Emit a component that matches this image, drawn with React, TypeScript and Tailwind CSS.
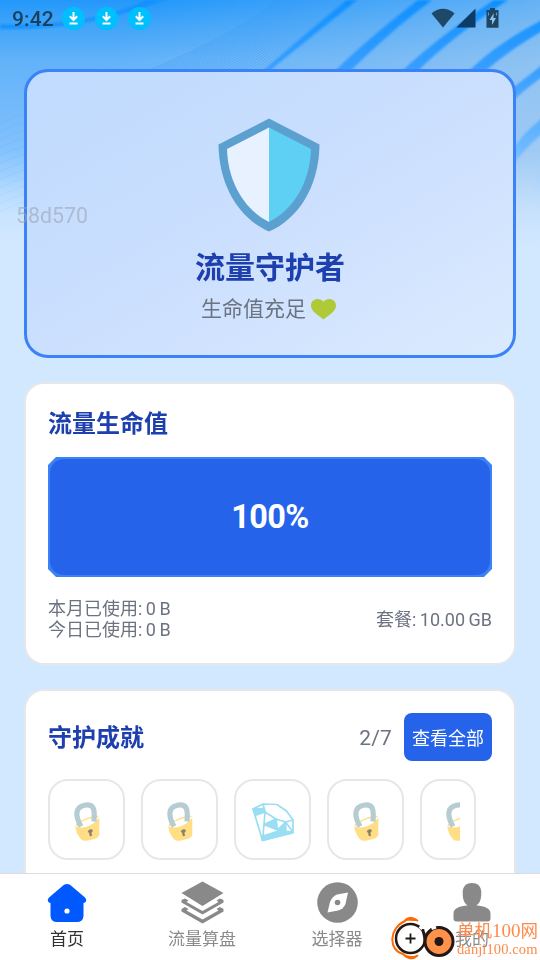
import { ReactNode } from 'react';

const ROBOTO = "font-['Roboto','Noto_Sans_CJK_SC',sans-serif]";

// thin mesh lines running behind the top of the first card
const meshLines = Array.from({ length: 26 }, (_, i) => i);

const Backdrop = () => (
  <svg className="absolute inset-x-0 top-0" width="540" height="250" viewBox="0 0 540 250" fill="none">
    <defs>
      <linearGradient id="sky" x1="0" y1="0" x2="0" y2="1">
        <stop offset="0" stopColor="#2398fb" />
        <stop offset="0.1" stopColor="#40a4f9" />
        <stop offset="0.24" stopColor="#62b2f9" />
        <stop offset="0.5" stopColor="#79bdfb" />
        <stop offset="0.7" stopColor="#8ec8ff" />
        <stop offset="0.86" stopColor="#b8dcff" />
        <stop offset="1" stopColor="#d1e8ff" />
      </linearGradient>
      <linearGradient id="haze" x1="0.3" y1="0" x2="1" y2="0.3">
        <stop offset="0" stopColor="#a9cdf0" stopOpacity="0" />
        <stop offset="0.3" stopColor="#a9cdf0" stopOpacity="0.15" />
        <stop offset="1" stopColor="#b4d0ec" stopOpacity="0.55" />
      </linearGradient>
      <linearGradient id="streak" gradientUnits="userSpaceOnUse" x1="0" y1="0" x2="0" y2="240">
        <stop offset="0" stopColor="#0f90ff" />
        <stop offset="0.3" stopColor="#3a9fff" />
        <stop offset="0.65" stopColor="#74bcff" />
        <stop offset="1" stopColor="#d1e8ff" stopOpacity="0" />
      </linearGradient>
      <linearGradient id="fade" x1="0" y1="0" x2="0" y2="1">
        <stop offset="0.6" stopColor="#d1e8ff" stopOpacity="0" />
        <stop offset="1" stopColor="#d1e8ff" />
      </linearGradient>
      <filter id="soft">
        <feGaussianBlur stdDeviation="0.9" />
      </filter>
    </defs>
    <rect width="540" height="250" fill="url(#sky)" />
    <rect width="540" height="250" fill="url(#haze)" />
    <path d="M0 24C60 26 110 18 146 0h18C110 20 60 30 0 29z" fill="#0c8fff" opacity=".8" filter="url(#soft)" />
    {meshLines.map((i) => (
      <path key={i} d={`M${150 + i * 4.5} 70C${186 + i * 4} 54 ${242 + i * 3} 30 ${276 + i * 2.8} 0`} stroke="#2b95f6" strokeWidth="0.8" opacity=".4" />
    ))}
    {meshLines.slice(0, 12).map((i) => (
      <path key={i} d={`M-4 ${125 + i * 8}L28 ${112 + i * 8}`} stroke="#63b2fb" strokeWidth="0.8" opacity=".35" />
    ))}
    <g fill="url(#streak)" filter="url(#soft)">
      <path d="M347 0C322 20 296 42 262 72h6C302 44 330 22 357 0z" />
      <path d="M418 0C390 22 362 44 334 72h15C374 48 402 22 432 0z" />
      <path d="M494 0C464 20 430 44 400 73h16C440 48 474 22 508 0z" />
      <path d="M542 20C512 36 490 50 467 73h16C500 58 520 44 542 31z" />
      <path d="M542 65C528 76 520 82 510 90v13C520 94 530 86 542 77z" />
      <path d="M542 118C530 128 522 136 512 150v18C520 154 530 144 542 134z" />
      <path d="M542 173C534 184 530 194 528 215h6C535 204 538 198 542 193z" opacity=".5" />
    </g>
    <rect width="540" height="250" fill="url(#fade)" />
  </svg>
);

const DownloadBadge = () => (
  <svg width="23" height="23" viewBox="0 0 23 23" fill="none">
    <circle cx="11.5" cy="11.5" r="11.5" fill="#00bfff" />
    <path d="M11.5 5v8M7.800 9.300l3.700 3.700 3.700-3.700M7.500 16.400h8" stroke="#fff" strokeWidth="2" />
  </svg>
);

const StatusBar = () => (
  <header className="relative flex h-[37px] shrink-0 items-center pl-3 pr-[41px] text-[#17415f]">
    <span className="w-[50px] pt-0.5 text-[21px] font-medium leading-none tracking-[0.1px]">9:42</span>
    <div className="flex gap-2.5">
      <DownloadBadge />
      <DownloadBadge />
      <DownloadBadge />
    </div>
    <div className="ml-auto flex items-center pb-[2px]">
      <svg width="24" height="20" viewBox="0 0 24 20" fill="#1e4868">
        <path d="M12 19.500L.5 5.500C7-.8 17-.8 23.500 5.500z" />
      </svg>
      <svg className="ml-px" width="20" height="20" viewBox="0 0 20 20" fill="#0c3b66">
        <path d="M19.500 .5v19H.3z" />
      </svg>
      <svg className="ml-[10px]" width="13" height="20" viewBox="0 0 13 20">
        <path d="M4 0h5v2h3.500v17.800H.5V2H4z" fill="#1f4563" />
        <path d="M7.800 5L3.500 12H6v5l4-7H7.300z" fill="#8fc4ee" />
        <path d="M2.500 4.500v3M10.500 4.500v3" stroke="#5b9ccc" />
      </svg>
    </div>
  </header>
);

const Shield = () => (
  <svg className="mr-[1.500px]" width="102" height="114" viewBox="0 0 102 114">
    <path d="M51 .5L101.500 26.500C101 69 80 101 51 113.500C22 101 1 69 .5 26.500z" fill="#5ca0cf" />
    <path d="M51 9.500V104C27 92 10 65 9 31z" fill="#e7f1ff" />
    <path d="M51 9.500V104C75 92 92 65 93 31z" fill="#5dd0f4" />
  </svg>
);

const Heart = () => (
  <svg width="25" height="21" viewBox="0 0 25 21" fill="#b0ca37">
    <path d="M12.500 20.500C8 16.500 0 12.800 0 6.800C0 -.5 9 -1.800 12.500 2.800C16 -1.800 25 -.5 25 6.800C25 12.800 17 16.500 12.500 20.500z" />
  </svg>
);

const LockIcon = () => (
  <svg className="shrink-0" width="26" height="39" viewBox="0 0 26 39" fill="none">
    <path d="M2 24C4 19.500 18 14 24.500 14.500" stroke="#ffde86" strokeWidth="1.600" />
    <path d="M1.300 24.500C10 27.500 19 23.500 25.300 15.500V32.500Q24.800 35.500 21 36.800L13 38.800Q8 39.300 6 36Q2 31 1.300 24.500z" fill="#ffde86" />
    <path d="M7 24.500C1 14 1 5 10.500 3.200C20 1.500 21 7 20 19.500" stroke="#b5ccd3" strokeWidth="5.200" />
    <path d="M14 29.500c1-2 4.500-2.800 4.500-.5l-1.500 2 .8 2.500-1.800.4-.5-3z" fill="#88806a" stroke="#88806a" strokeWidth=".6" />
  </svg>
);

const DiamondIcon = () => (
  <svg className="shrink-0" width="44" height="40" viewBox="0 0 44 40" fill="none" stroke="#99def2" strokeWidth="1.700" strokeLinejoin="round">
    <path d="M2 7L12 2L26 2.500L35.500 9L42 18L42 30L11.500 38.500z" />
    <path d="M12 2L14 10L13 22.500L25 17L34.500 20L42 18M14 10L25 17L26.500 28L34.500 20L42 30M13 22.500L26.500 28M13 22.500L11.500 38.500M5 13L13 10" />
    <path d="M2 7L13 6.500L14 10L5 13zM14 22.500L25 18L25.500 27zM27 29L34.500 20.500L35 30zM11.500 38.500L12 34L26 29.500L42 29.500V31z" fill="#99def2" />
  </svg>
);

const HomeIcon = () => (
  <svg width="40" height="40" viewBox="0 0 40 40">
    <path d="M17 1.800Q20 .2 23 1.800L38 14.500Q40.500 17.500 38 19.500L36.500 20V33Q36 39 30 39H10Q4 39 3.500 33V20L2 19.500Q-.5 17.500 2 14.500z" fill="#0058ff" />
    <circle cx="20" cy="28" r="2.600" fill="#fff" />
  </svg>
);

const LayersIcon = () => (
  <svg width="43" height="43" viewBox="0 0 43 43" fill="#898989">
    <path d="M21.500 .5L42.500 12L21.500 25L.5 12z" />
    <path d="M4 17.500L.5 19V21.500L21.500 33.500L42.500 21.500V19L39 17.500L35.500 19.500L37.500 21L21.500 30L5.500 21L7.500 19.500z" />
    <path d="M4 26L.5 28V30.500L21.500 42.500L42.500 30.500V28L39 26L35.500 28L37.500 29.500L21.500 38.500L5.500 29.500L7.500 28z" />
  </svg>
);

const CompassIcon = () => (
  <svg width="41" height="41" viewBox="0 0 41 41">
    <circle cx="20.500" cy="20.500" r="20.300" fill="#898989" />
    <path d="M31 10.500L28.500 22Q26.500 27 21 28.500L10.500 30.500L13 20Q15 14.500 20 12.500z" fill="#fff" />
    <circle cx="20.500" cy="20.500" r="2.800" fill="#898989" />
  </svg>
);

const PersonIcon = () => (
  <svg width="38" height="40" viewBox="0 0 38 40" fill="#898989">
    <path d="M19 0C24.500 0 28.300 3 28.300 9.500C28.300 17.500 26.500 20 23.500 22.500C31 23 37.500 25 37.500 30.500V35.500Q37.500 38.500 34.500 38.500H3.500Q.5 38.500 .5 35.500V30.500C.5 25 7 23 14.500 22.500C11.500 20 9.700 17.500 9.700 9.500C9.700 3 13.500 0 19 0z" />
  </svg>
);

const Card = ({ children, className = '' }: { children: ReactNode; className?: string }) => (
  <section className={`rounded-[20px] border-2 border-[#e5e7eb] bg-white px-[22px] ${className}`}>{children}</section>
);

const achievements = ['lock', 'lock', 'diamond', 'lock'];

const tabs = [
  { label: '首页', icon: <HomeIcon />, active: true },
  { label: '流量算盘', icon: <LayersIcon />, active: false },
  { label: '选择器', icon: <CompassIcon />, active: false },
  { label: '我的', icon: <PersonIcon />, active: false },
];

const SiteMark = () => (
  <div className="absolute bottom-0 right-[3px] flex h-[43px] items-center text-[#ff8a4a]">
    <svg width="66" height="43" viewBox="0 0 66 43" fill="none">
      <path d="M27 4C21-1 15 1 14 4C-2 11-3 33 12 37C16 42 23 43 27 38" stroke="#ff6a00" strokeWidth="2" />
      <path d="M12 5C15 0 23 0 27 4C22 4 16 3 12 5zM11 36C15 43 24 43 27 38C21 40 16 39 11 36z" fill="#ff6a00" />
      <circle cx="19.500" cy="21.500" r="14.500" fill="#fff" stroke="#231815" strokeWidth="2.500" />
      <path d="M19.500 16.500v10M14.500 21.500h10" stroke="#231815" strokeWidth="1.800" />
      <path d="M28.500 9.500l5 4" stroke="#fff" strokeWidth="3" />
      <circle cx="48" cy="24.500" r="14" fill="#ff924a" stroke="#231815" strokeWidth="3" />
      <circle cx="48" cy="24.500" r="4.500" fill="#231815" />
      <path d="M32 12C32 17 34 20 34 24M41 12L35 18" stroke="#231815" strokeWidth="2.500" />
      <path d="M40.500 11.500l4.500-1.500" stroke="#fff" strokeWidth="3" />
    </svg>
    <div className="flex w-[80px] flex-col whitespace-nowrap pt-0.5 font-['Liberation_Serif','Noto_Sans_CJK_SC',serif]">
      <span className="text-[17.500px] leading-[20px]">
        单机<span className="text-[19px]">100</span>网
      </span>
      <span className="text-[14.500px] leading-[17px] tracking-[0.1px]">danji100.com</span>
    </div>
  </div>
);

export default function App() {
  return (
    <div className={`relative flex h-[960px] w-[540px] flex-col overflow-hidden bg-[#d1e8ff] ${ROBOTO}`}>
      <Backdrop />
      <StatusBar />

      <main className="relative flex min-h-0 flex-1 flex-col gap-6 overflow-hidden px-6 pt-8">
        <section className="flex h-[289px] shrink-0 flex-col items-center rounded-[24px] border-[3px] border-[#3b82f6] bg-linear-to-br from-[#bfdbfe] via-[#cbdffe] to-[#dbeafe] pt-[46px]">
          <Shield />
          <h1 className="mt-[15px] text-[30px] font-bold leading-[42px] text-[#1e40af]">流量守护者</h1>
          <p className="mr-[3px] mt-[5px] flex items-center gap-[5px] text-[21px] leading-[30px] text-[#6b7280]">
            生命值充足
            <Heart />
          </p>
        </section>

        <Card className="flex h-[283px] shrink-0 flex-col pt-[22px]">
          <h2 className="text-[24px] font-bold leading-[36px] text-[#1e40af]">流量生命值</h2>
          <div className="mt-[15px] h-[120px] bg-[#3b82f6] p-0.5 [clip-path:polygon(8px_0,calc(100%-8px)_0,100%_8px,100%_calc(100%-8px),calc(100%-8px)_100%,8px_100%,0_calc(100%-8px),0_8px)]">
            <div className="flex h-full items-center justify-center rounded-[14px] bg-[#2563eb] pt-px text-[32.500px] font-bold tracking-[-0.6px] text-white">100%</div>
          </div>
          <div className="mt-[21px] flex items-center justify-between text-[18px] leading-[21px] text-[#6b7280] [word-spacing:-1px]">
            <div>
              <p>本月已使用: 0 B</p>
              <p>今日已使用: 0 B</p>
            </div>
            <p>套餐: 10.00 GB</p>
          </div>
        </Card>

        <Card className="flex h-[220px] shrink-0 flex-col pt-[22px]">
          <div className="flex h-12 items-center">
            <h2 className="pt-0.5 text-[24px] font-bold text-[#1e40af]">守护成就</h2>
            <span className="ml-auto pt-[3px] text-[21px] tracking-[0.2px] text-[#6b7280]">2/7</span>
            <button className="ml-3 h-12 w-[88px] rounded-lg bg-[#2563eb] pt-0.5 text-[18px] text-white">查看全部</button>
          </div>
          <div className="mt-[18px] flex gap-4">
            {achievements.map((kind, i) => (
              <div key={i} className="flex h-[81px] w-[77px] items-center justify-center rounded-[20px] border-2 border-[#e5e7eb] pt-1">
                {kind === 'lock' ? <LockIcon /> : <DiamondIcon />}
              </div>
            ))}
            <div className="h-[81px] w-[56px] rounded-[20px] border-2 border-[#e5e7eb] pl-6 pr-3.5 pt-[21px]">
              <div className="flex overflow-hidden">
                <LockIcon />
              </div>
            </div>
          </div>
        </Card>
      </main>

      <nav className="relative grid h-[87px] shrink-0 grid-cols-4 border-t border-[#dcdcdc] bg-white">
        {tabs.map((tab) => (
          <div key={tab.label} className="flex flex-col items-center pr-px pt-[7px]">
            <div className="flex h-[43px] items-center">{tab.icon}</div>
            <span className={`mt-[3px] text-[17px] leading-[24px] ${tab.active ? 'text-[#333333]' : 'text-[#8a8a8a]'}`}>{tab.label}</span>
          </div>
        ))}
      </nav>

      <span className="absolute left-4 top-[203px] text-[21.300px] leading-[26px] text-[#9ca3af]/60">58d570</span>
      <SiteMark />
    </div>
  );
}
